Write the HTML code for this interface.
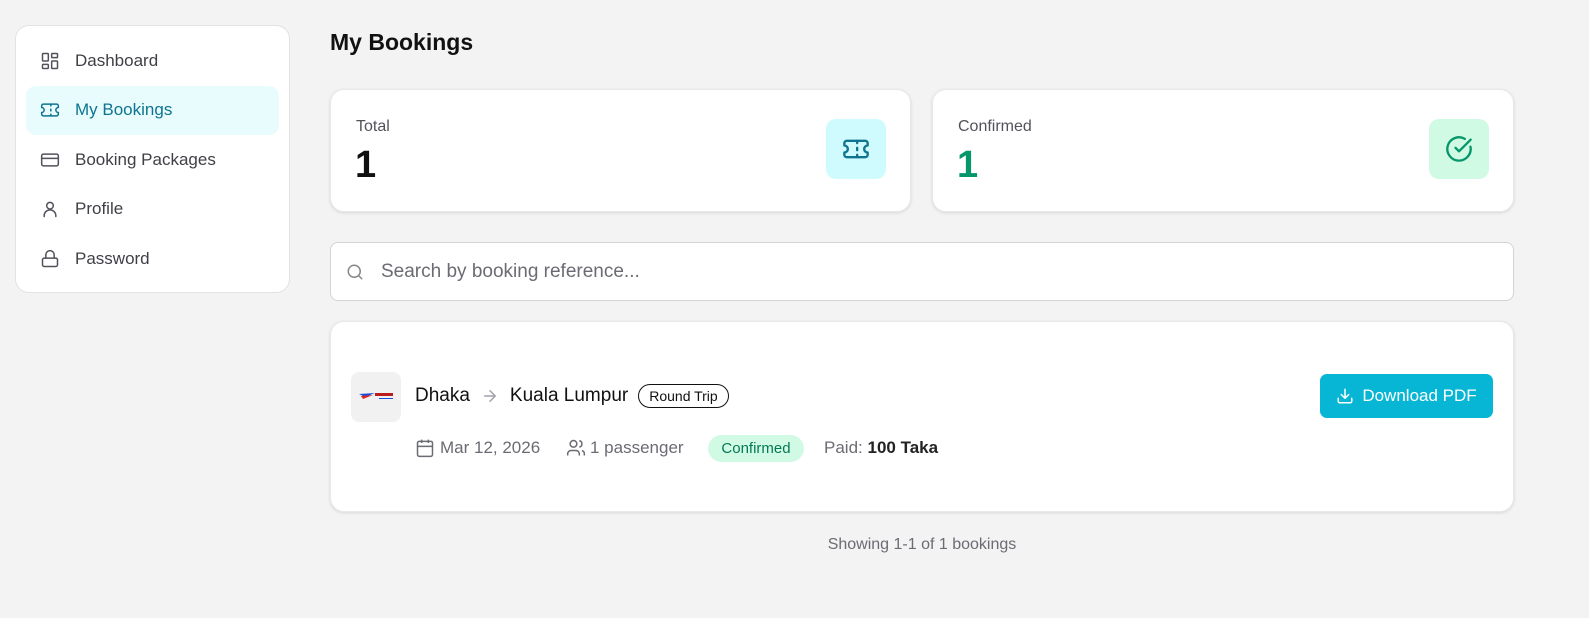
<!DOCTYPE html>
<html><head><meta charset="utf-8"><style>
*{box-sizing:border-box;margin:0;padding:0}
body{width:1589px;height:618px;background:#f3f3f3;font-family:"Liberation Sans",sans-serif;position:relative;overflow:hidden;color:#111}
.side{position:absolute;left:15px;top:25px;width:275px;height:268px;background:#fff;border:1px solid #e2e2e2;border-radius:14px;padding:10px}
.item{height:49.5px;display:flex;align-items:center;padding-left:14px;font-size:17px;color:#3f3f46;border-radius:10px;margin-bottom:0}
.item svg{width:20px;height:20px;margin-right:15px;fill:none;stroke:#52525b;stroke-width:1.8;stroke-linecap:round;stroke-linejoin:round}
.item.act{background:#e8fcfe;color:#0e7490}
.item.act svg{stroke:#0e7490}
h1{position:absolute;left:330px;top:29px;font-size:23px;font-weight:bold;color:#111}
.card{position:absolute;background:#fff;border-radius:14px;box-shadow:0 1px 3px rgba(0,0,0,.12);border:1px solid #e8e8e8}
.lbl{position:absolute;left:25px;top:28px;font-size:16px;color:#52525b}
.num{position:absolute;left:24px;top:54px;font-size:38px;font-weight:bold}
.ic{position:absolute;right:24px;top:29px;width:60px;height:60px;border-radius:10px;display:flex;align-items:center;justify-content:center}
.ic svg{width:28px;height:28px;fill:none;stroke-width:2;stroke-linecap:round;stroke-linejoin:round}
.search{position:absolute;left:330px;top:242px;width:1184px;height:59px;background:#fff;border:1px solid #d4d4d8;border-radius:8px}
.search span{position:absolute;left:50px;top:18px;font-size:19px;color:#6b6b73}
.meta{position:absolute;top:438px;font-size:17px;color:#6b6b73;display:flex;align-items:center}
</style></head><body>
<div class="side">
<div class="item"><svg viewBox="0 0 24 24"><rect x="3" y="3" width="7" height="9" rx="1"/><rect x="14" y="3" width="7" height="5" rx="1"/><rect x="14" y="12" width="7" height="9" rx="1"/><rect x="3" y="16" width="7" height="5" rx="1"/></svg>Dashboard</div>
<div class="item act"><svg viewBox="0 0 24 24"><path d="M2 9a3 3 0 0 1 0 6v2a2 2 0 0 0 2 2h16a2 2 0 0 0 2-2v-2a3 3 0 0 1 0-6V7a2 2 0 0 0-2-2H4a2 2 0 0 0-2 2Z"/><path d="M13 5v2M13 11v2M13 17v2"/></svg>My Bookings</div>
<div class="item"><svg viewBox="0 0 24 24"><rect x="2" y="5" width="20" height="14" rx="2"/><path d="M2 10h20"/></svg>Booking Packages</div>
<div class="item"><svg viewBox="0 0 24 24"><circle cx="12" cy="8" r="4"/><path d="M5 21v-1a7 7 0 0 1 14 0v1"/></svg>Profile</div>
<div class="item"><svg viewBox="0 0 24 24"><rect x="3" y="11" width="18" height="10" rx="2"/><path d="M7 11V7a5 5 0 0 1 10 0v4"/></svg>Password</div>
</div>
<h1>My Bookings</h1>
<div class="card" style="left:330px;top:89px;width:581px;height:123px">
<div class="lbl">Total</div><div class="num">1</div>
<div class="ic" style="background:#cffafe"><svg viewBox="0 0 24 24" stroke="#0e7490"><path d="M2 9a3 3 0 0 1 0 6v2a2 2 0 0 0 2 2h16a2 2 0 0 0 2-2v-2a3 3 0 0 1 0-6V7a2 2 0 0 0-2-2H4a2 2 0 0 0-2 2Z"/><path d="M13 5v2M13 11v2M13 17v2"/></svg></div>
</div>
<div class="card" style="left:932px;top:89px;width:582px;height:123px">
<div class="lbl">Confirmed</div><div class="num" style="color:#059669">1</div>
<div class="ic" style="background:#d1fae5"><svg viewBox="0 0 24 24" stroke="#059669"><path d="M21.8 10A10 10 0 1 1 17 3.3"/><path d="m9 11 3 3L22 4"/></svg></div>
</div>
<div class="search"><svg style="position:absolute;left:15px;top:20px" width="18" height="18" viewBox="0 0 24 24" fill="none" stroke="#888" stroke-width="2" stroke-linecap="round"><circle cx="11" cy="11" r="8"/><path d="m21 21-4.3-4.3"/></svg><span>Search by booking reference...</span></div>
<div class="card" style="left:330px;top:321px;width:1184px;height:191px">
<div style="position:absolute;left:20px;top:50px;width:50px;height:50px;background:#f1f1f1;border-radius:8px">
<svg width="50" height="50" viewBox="0 0 50 50"><path d="M8 22 L24 21 L14 25Z" fill="#1d4ed8"/><path d="M10 24 L22 23 L12 27Z" fill="#dc2626"/><rect x="24" y="21" width="18" height="3" fill="#b91c1c"/><rect x="28" y="26" width="14" height="1" fill="#1d4ed8"/></svg></div>
<div style="position:absolute;left:84px;top:62px;font-size:19px;display:flex;align-items:center;height:24px">Dhaka<svg width="18" height="18" viewBox="0 0 24 24" fill="none" stroke="#a1a1aa" stroke-width="2" stroke-linecap="round" stroke-linejoin="round" style="margin:0 11px"><path d="M5 12h14M12 5l7 7-7 7"/></svg>Kuala Lumpur<span style="margin-left:10px;font-size:14px;border:1px solid #111;border-radius:12px;padding:3px 10px;line-height:16px">Round Trip</span></div>
</div>
<div class="meta" style="left:415px"><svg width="20" height="20" viewBox="0 0 24 24" fill="none" stroke="#6b6b73" stroke-width="1.8" style="margin-right:5px"><rect x="3" y="4" width="18" height="18" rx="2"/><path d="M16 2v4M8 2v4M3 10h18"/></svg>Mar 12, 2026</div>
<div class="meta" style="left:566px"><svg width="20" height="20" viewBox="0 0 24 24" fill="none" stroke="#6b6b73" stroke-width="1.8" style="margin-right:4px"><circle cx="9" cy="7" r="4"/><path d="M16 21v-2a4 4 0 0 0-4-4H6a4 4 0 0 0-4 4v2M16 3.1a4 4 0 0 1 0 7.8M22 21v-2a4 4 0 0 0-3-3.9"/></svg>1 passenger</div>
<div style="position:absolute;left:708px;top:435px;width:96px;height:27px;background:#d1fae5;color:#047857;border-radius:14px;font-size:15px;text-align:center;line-height:27px">Confirmed</div>
<div class="meta" style="left:824px">Paid:&nbsp;<b style="color:#222">100 Taka</b></div>
<div style="position:absolute;left:1320px;top:374px;width:173px;height:44px;background:#06b6d4;border-radius:7px;color:#fff;font-size:17px;display:flex;align-items:center;justify-content:center"><svg width="18" height="18" viewBox="0 0 24 24" fill="none" stroke="#fff" stroke-width="2" stroke-linecap="round" style="margin-right:8px"><path d="M21 15v4a2 2 0 0 1-2 2H5a2 2 0 0 1-2-2v-4M7 10l5 5 5-5M12 15V3"/></svg>Download PDF</div>
<div style="position:absolute;left:330px;width:1184px;top:536px;text-align:center;font-size:16px;color:#6b6b73">Showing 1-1 of 1 bookings</div>
</body></html>
